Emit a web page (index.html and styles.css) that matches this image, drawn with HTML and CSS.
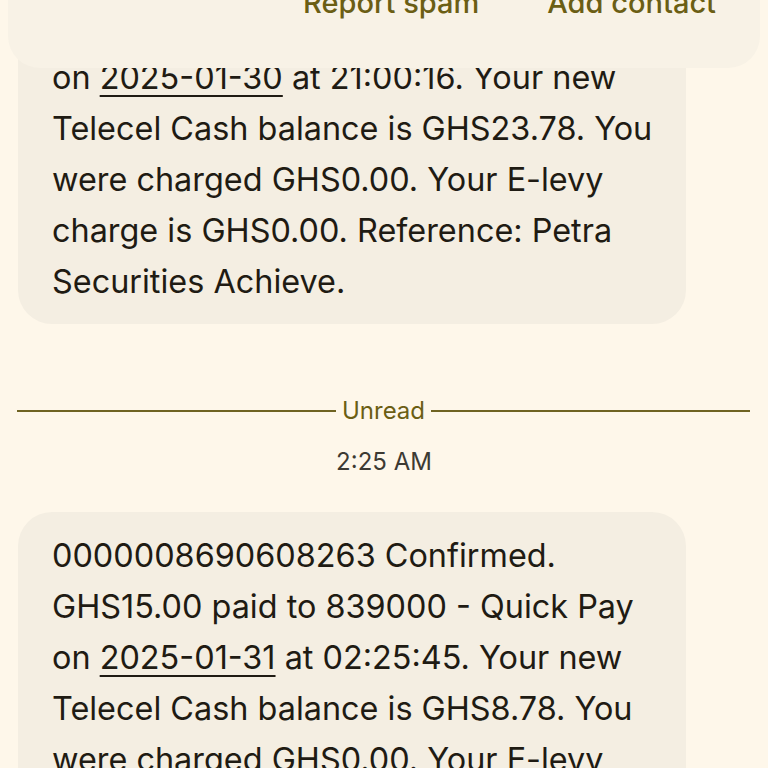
FILE: index.html
```html
<!DOCTYPE html>
<html>
<head>
<meta charset="utf-8">
<link rel="stylesheet" href="styles.css">
</head>
<body>
<div class="screen">
  <div class="topbar">
    <span class="action">Report spam</span>
    <span class="action">Add contact</span>
  </div>
  <div class="bubble first">
    <p class="msg">on <span class="link">2025-01-30</span> at 21:00:16. Your new<br>Telecel Cash balance is GHS23.78. You<br>were charged GHS0.00. Your E-levy<br>charge is GHS0.00. Reference: Petra<br>Securities Achieve.</p>
  </div>
  <div class="divider">
    <span class="rule"></span>
    <span class="label">Unread</span>
    <span class="rule"></span>
  </div>
  <div class="time">2:25 AM</div>
  <div class="bubble second">
    <p class="msg">0000008690608263 Confirmed.<br>GHS15.00 paid to 839000 - Quick Pay<br>on <span class="link">2025-01-31</span> at 02:25:45. Your new<br>Telecel Cash balance is GHS8.78. You<br>were charged GHS0.00. Your E-levy<br>charge is GHS0.00. Reference: Petra</p>
  </div>
</div>
</body>
</html>
```
FILE: styles.css
```css
html, body {
  margin: 0;
  padding: 0;
  background: #fef7ea;
}
.screen {
  position: relative;
  width: 768px;
  height: 768px;
  overflow: hidden;
  font-family: Inter, Roboto, sans-serif;
  color: #1f1b13;
}
.topbar {
  position: absolute;
  top: -40px;
  left: 8px;
  width: 752px;
  height: 108px;
  background: #f8f2e6;
  border-radius: 0 0 32px 32px;
  display: flex;
  justify-content: flex-end;
  align-items: flex-end;
  gap: 68px;
  padding: 0 44px 50px 0;
  box-sizing: border-box;
  z-index: 2;
}
.action {
  color: #6b5e14;
  font-size: 29px;
  font-weight: 500;
  line-height: 30px;
}
.bubble {
  margin-left: 18px;
  width: 668px;
  background: #f4eee2;
  border-radius: 34px;
  padding: 0 20px 17px 34px;
  box-sizing: border-box;
}
.bubble.first {
  margin-top: -40px;
  padding-top: 92px;
}
.msg {
  margin: 0;
  font-size: 32.4px;
  line-height: 51px;
  white-space: nowrap;
  font-weight: 400;
}
.link {
  text-decoration: underline;
  text-decoration-thickness: 2px;
  text-underline-offset: 6px;
}
.divider {
  display: flex;
  align-items: center;
  gap: 6px;
  margin: 71px 18px 0 17px;
}
.rule {
  flex: 1;
  height: 2px;
  background: #6f6322;
}
.label {
  color: #6b5e14;
  font-size: 24px;
  line-height: 32px;
}
.time {
  text-align: center;
  color: #3d3a33;
  font-size: 24px;
  line-height: 32px;
  margin-top: 19px;
}
.bubble.second {
  margin-top: 34px;
  padding-top: 18px;
}
```
